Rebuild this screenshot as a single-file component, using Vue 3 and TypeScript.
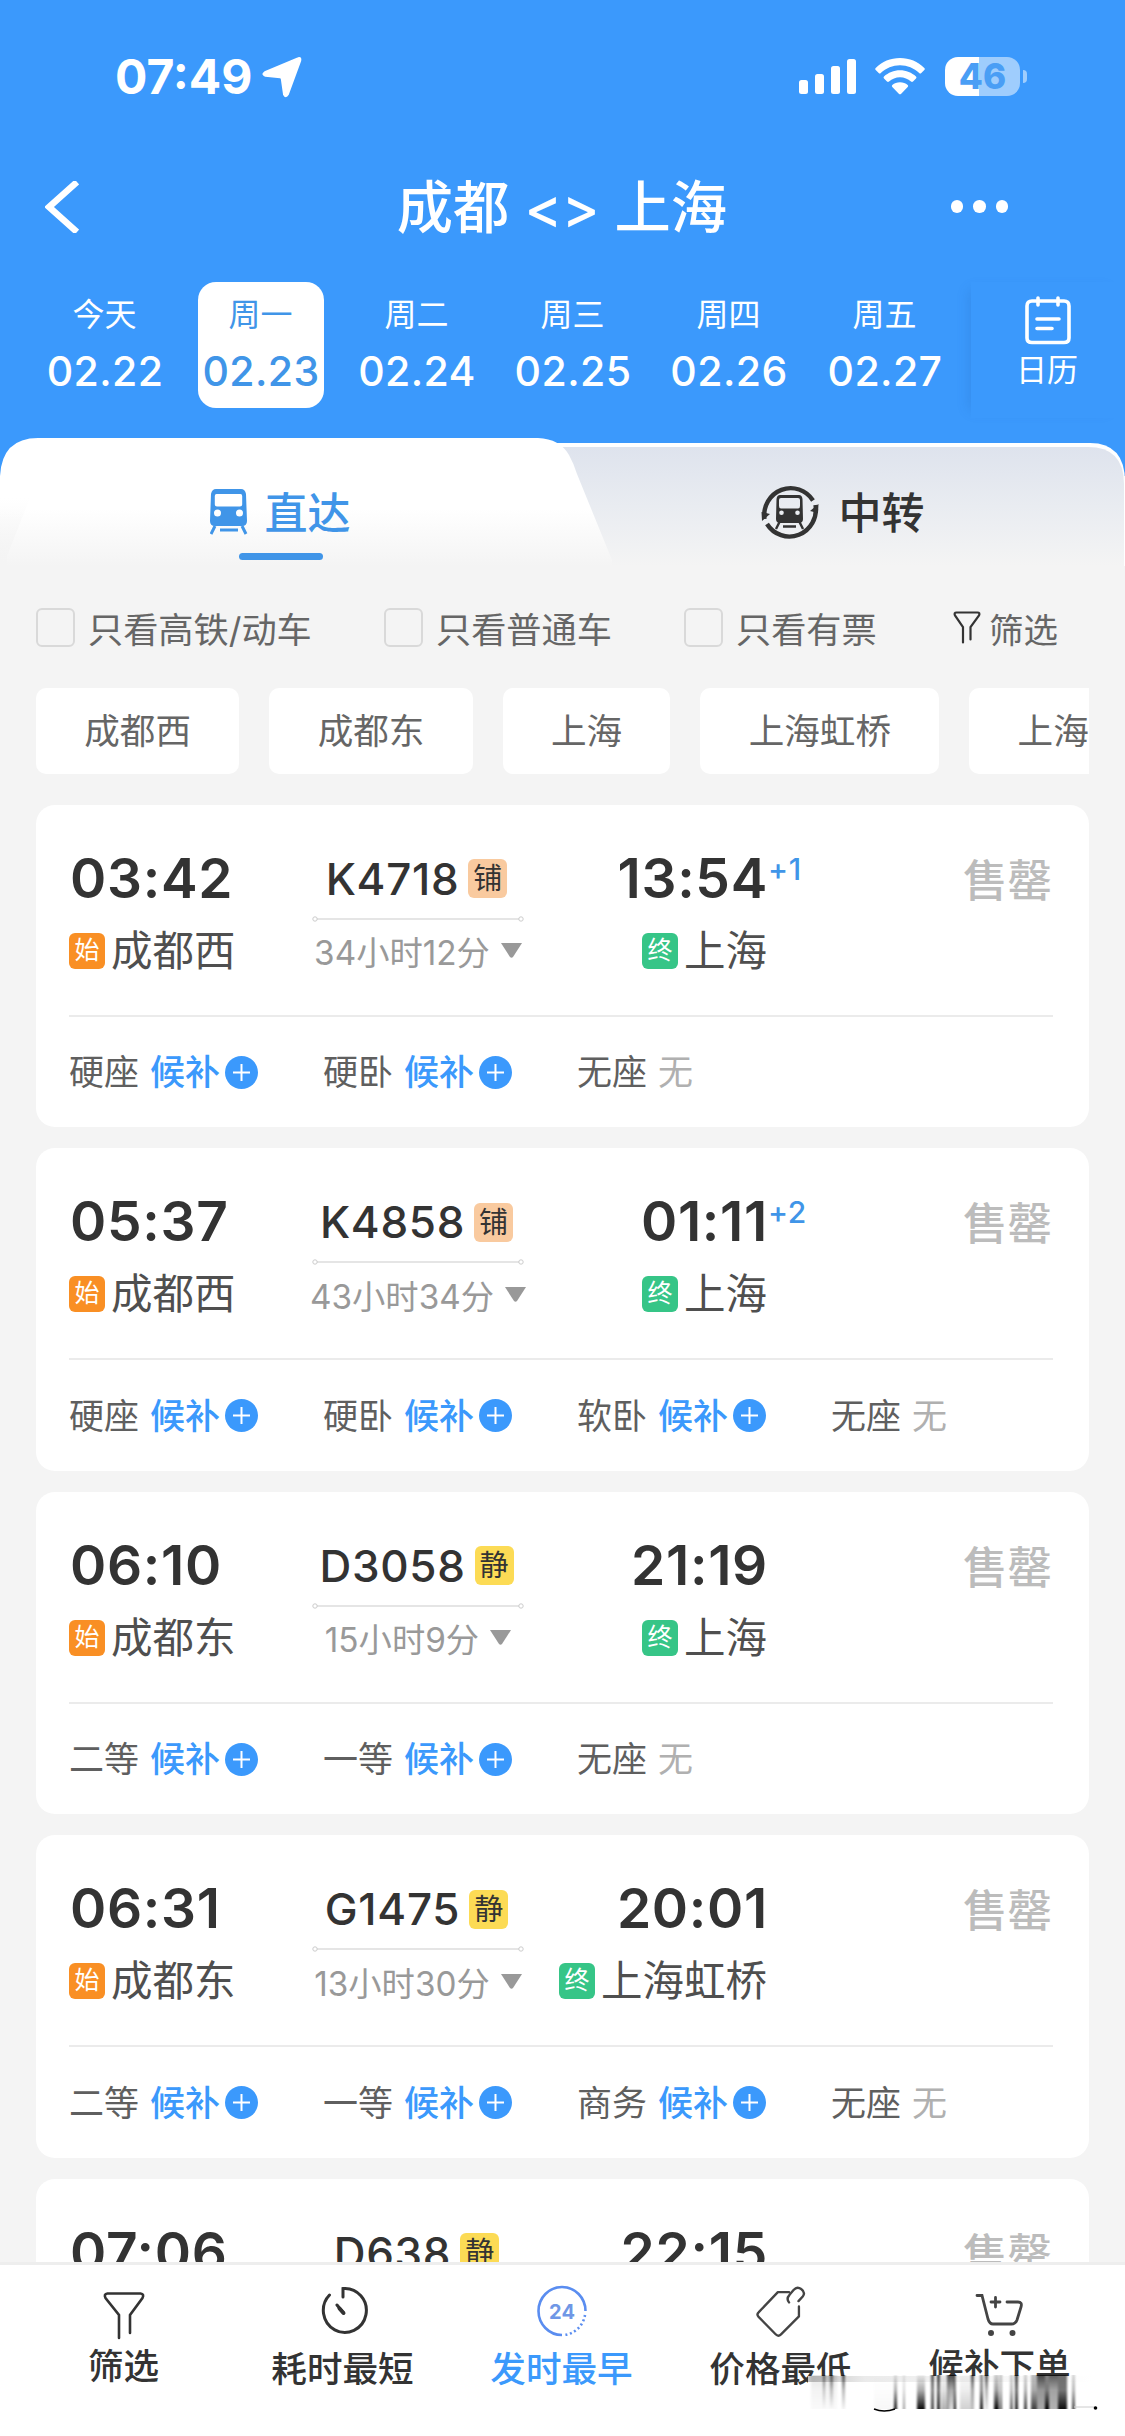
<script setup lang="ts">
interface Seat { name: string; waitlist: boolean }
interface Train {
  dep: string
  from: string
  no: string
  tag: '铺' | '静'
  duration: string
  arr: string
  plus?: string
  to: string
  seats: Seat[]
}

const days = [
  { week: '今天', date: '02.22' },
  { week: '周一', date: '02.23' },
  { week: '周二', date: '02.24' },
  { week: '周三', date: '02.25' },
  { week: '周四', date: '02.26' },
  { week: '周五', date: '02.27' },
]
const activeDay = 1

const checks = ['只看高铁/动车', '只看普通车', '只看有票']
const stations = ['成都西', '成都东', '上海', '上海虹桥', '上海']

const w = (name: string): Seat => ({ name, waitlist: true })
const none: Seat = { name: '无座', waitlist: false }

const trains: Train[] = [
  { dep: '03:42', from: '成都西', no: 'K4718', tag: '铺', duration: '34小时12分', arr: '13:54', plus: '+1', to: '上海', seats: [w('硬座'), w('硬卧'), none] },
  { dep: '05:37', from: '成都西', no: 'K4858', tag: '铺', duration: '43小时34分', arr: '01:11', plus: '+2', to: '上海', seats: [w('硬座'), w('硬卧'), w('软卧'), none] },
  { dep: '06:10', from: '成都东', no: 'D3058', tag: '静', duration: '15小时9分', arr: '21:19', to: '上海', seats: [w('二等'), w('一等'), none] },
  { dep: '06:31', from: '成都东', no: 'G1475', tag: '静', duration: '13小时30分', arr: '20:01', to: '上海虹桥', seats: [w('二等'), w('一等'), w('商务'), none] },
  { dep: '07:06', from: '', no: 'D638', tag: '静', duration: '', arr: '22:15', to: '', seats: [] },
]

// vertical streaks: x, width, opacity at the top, opacity at the bottom
const streaks: [number, number, number, number][] = [
  [3, 26, 0.12, 0.02], [15, 2, 0.7, 0], [22, 3, 0.7, 0], [34, 3, 0.8, 0.05],
  [66, 22, 0, 0.03], [86, 3, 0.1, 0.9], [95, 2, 0.1, 0.4], [109, 8, 0.05, 0.95],
  [123, 3, 0.8, 0.7], [129, 3, 0.9, 0.85], [133, 8, 0.05, 0.3], [139, 8, 0.85, 0.15], [146, 2, 0.4, 0.9],
  [152, 14, 0.03, 0.18], [163, 3, 0.85, 0.1], [172, 3, 0.5, 0.9], [177, 3, 0.85, 0.1],
  [186, 5, 0.2, 0.95], [192, 2, 0.3, 0.7], [202, 3, 0.2, 0.6], [207, 3, 0.9, 0.85], [216, 3, 0.2, 0.75],
  [223, 6, 0.3, 0.75], [229, 8, 0.9, 0.35], [237, 4, 0.6, 1], [241, 9, 0.8, 0.3], [250, 9, 0.7, 0.95],
  [264, 3, 0.2, 0.7],
]
</script>

<template>
  <div class="phone">
    <header class="top">
      <div class="status">
        <span class="clock">07:49</span>
        <svg class="loc" width="40" height="42" viewBox="0 0 40 42"><path d="M36.500 2.500Q38.600 1.500 38 4.500L25.500 38.500Q23.800 41.500 22.300 38.500L20 22.500Q19.800 21 18 21L3.500 19.600Q0 18.300 3 16.500Z" fill="#fff" stroke="#fff" stroke-width="2.500" stroke-linejoin="round" /></svg>
        <span class="grow"></span>
        <svg class="bars" width="58" height="36" viewBox="0 0 58 36" fill="#fff">
          <rect x="0" y="21" width="9" height="14" rx="2.500" /><rect x="16" y="15" width="9" height="20" rx="2.500" />
          <rect x="32" y="7" width="9" height="28" rx="2.500" /><rect x="48" y="0" width="9" height="35" rx="2.500" />
        </svg>
        <svg class="wifi" width="50" height="37" viewBox="0 0 50 37" fill="#fff">
          <path d="M25 0C34.500 0 43 3.700 49.300 9.900Q50.300 11 49.300 12L46.300 15Q45.300 16 44.200 15C39 10.200 32.300 7.300 25 7.300S11 10.200 5.800 15Q4.700 16 3.700 15L.7 12Q-.3 11 .7 9.900C7 3.700 15.500 0 25 0Z" />
          <path d="M25 12.200C31.200 12.200 36.800 14.600 41 18.400Q42 19.500 41 20.500L38 23.500Q37 24.400 36 23.500C33 20.900 29.200 19.300 25 19.300S17 20.900 14 23.500Q13 24.400 12 23.500L9 20.500Q8 19.500 9 18.400C13.200 14.600 18.800 12.200 25 12.200Z" />
          <path d="M25 24.300C28 24.300 30.600 25.300 32.700 27Q33.700 28 32.700 29L26.200 35.700Q25 36.800 23.800 35.700L17.300 29Q16.300 28 17.300 27C19.400 25.300 22 24.300 25 24.300Z" />
        </svg>
        <span class="battery"><b>46</b></span><i class="cap"></i>
      </div>

      <div class="nav">
        <svg width="34" height="52" viewBox="0 0 34 52"><path d="M32 1L4 26L32 51" fill="none" stroke="#fff" stroke-width="6.500" /></svg>
        <h1>成都 &lt;&gt; 上海</h1>
        <span class="dots"><i></i><i></i><i></i></span>
      </div>

      <div class="dates">
        <div v-for="(d, i) in days" :key="d.date" class="day" :class="{ on: i === activeDay }">
          <span class="week">{{ d.week }}</span>
          <span class="date">{{ d.date }}</span>
        </div>
        <div class="calendar">
          <svg width="46" height="49" viewBox="0 0 46 49" fill="none" stroke="#fff" stroke-width="3.600" stroke-linecap="round">
            <path d="M10 5H7Q2 5 2 10V42Q2 46.500 7 46.500H39Q44 46.500 44 42V10Q44 5 39 5H36M17 5H29M13 2V9M33 2V9M12 23H34M12 32.500H27M9 5H37" />
          </svg>
          <span>日历</span>
        </div>
      </div>
    </header>

    <div class="tabs">
      <svg class="shape" width="1125" height="128" viewBox="0 0 1125 128">
        <defs>
          <linearGradient id="grey" x1="0" y1="0" x2="0" y2="1"><stop offset="0" stop-color="#dee3ed" /><stop offset=".5" stop-color="#e9ecf1" /><stop offset="1" stop-color="#f4f4f4" /></linearGradient>
          <linearGradient id="white" x1="0" y1="0" x2="0" y2="1"><stop offset="0" stop-color="#fff" /><stop offset=".55" stop-color="#fff" /><stop offset="1" stop-color="#f4f4f4" /></linearGradient>
          <linearGradient id="edge" x1="0" y1="0" x2="0" y2="1"><stop offset="0" stop-color="#f4f4f4" stop-opacity="0" /><stop offset="1" stop-color="#f4f4f4" /></linearGradient>
        </defs>
        <path d="M400 5H1090Q1125 5 1125 44V128H400Z" fill="#fff" />
        <path d="M400 9H1088Q1124 9 1124 46V128H400Z" fill="url(#grey)" />
        <path d="M0 38Q2 0 38 0H538Q560 1 569 17Q574 26 577 36L612 122V128H0Z" fill="url(#white)" />
        <path d="M0 60H30L7 118V128H0Z" fill="url(#edge)" />
      </svg>
      <div class="tab active">
        <div class="label">
          <svg width="38" height="46" viewBox="0 0 38 46">
            <path fill="#4095e8" fill-rule="evenodd" d="M6 0H31Q35 0 36 5L37 32Q37 37 32 37H5Q0 37 0 32L1 5Q2 0 6 0ZM6.500 5Q4.800 5 4.800 7V15.500Q4.800 17.500 7 17.500H30Q32.200 17.500 32.200 15.500V7Q32.200 5 30.500 5ZM7.500 20.500A3.500 3.500 0 1 0 7.500 27.500A3.500 3.500 0 1 0 7.500 20.500ZM29.500 20.500A3.500 3.500 0 1 0 29.500 27.500A3.500 3.500 0 1 0 29.500 20.500Z" />
            <path d="M5 37L1 45M32 37L36 45M10 41H28" stroke="#4095e8" stroke-width="3" />
          </svg>
          <span>直达</span>
        </div>
        <i class="underline"></i>
      </div>
      <div class="tab">
        <div class="label second">
          <svg width="60" height="60" viewBox="0 0 60 60">
            <g fill="none" stroke="#333" stroke-width="4.400">
              <path d="M4.500 37A26.500 27 0 0 1 53 18.500" /><path d="M55.500 23A26.500 27 0 0 1 7 42" />
            </g>
            <path d="M1.500 30L2 39L10 32ZM50 29L58.500 22L58 31Z" fill="#333" />
            <path fill="#333" fill-rule="evenodd" d="M20 13H39Q42 13 42.500 17L43 37Q43 41 39 41H20Q16 41 16 37L16.500 17Q17 13 20 13ZM21 16Q19 16 19 18V24Q19 26.500 21 26.500H38Q40 26.500 40 24V18Q40 16 38 16ZM21.500 28.500A2.300 2.300 0 1 0 21.500 33.100A2.300 2.300 0 1 0 21.500 28.500ZM37.500 28.500A2.300 2.300 0 1 0 37.500 33.100A2.300 2.300 0 1 0 37.500 28.500Z" />
            <path d="M19.500 40L16 47M39.500 40L43 47M23 44.500H36" stroke="#333" stroke-width="2.400" />
          </svg>
          <span>中转</span>
        </div>
      </div>
    </div>

    <div class="filters">
      <label v-for="c in checks" :key="c"><i class="box"></i><span>{{ c }}</span></label>
      <div class="more">
        <svg width="28" height="33" viewBox="0 0 28 33"><path d="M10 31.500V16L2 4.500Q.7 1.500 3.500 1.500H24.500Q27.300 1.500 26 4.500L17.500 16V28.500" fill="none" stroke="#333" stroke-width="2.200" stroke-linecap="round" /></svg>
        <span>筛选</span>
      </div>
    </div>

    <div class="chips"><span v-for="(s, i) in stations" :key="i">{{ s }}</span></div>

    <main class="list">
      <article v-for="t in trains" :key="t.no" class="card">
        <div class="info">
          <div class="dep">
            <div class="time">{{ t.dep }}</div>
            <div v-if="t.from" class="station"><i class="mark start">始</i>{{ t.from }}</div>
          </div>
          <div class="mid">
            <div class="no"><span>{{ t.no }}</span><i class="tag" :class="{ quiet: t.tag === '静' }">{{ t.tag }}</i></div>
            <template v-if="t.duration">
              <svg class="line" width="212" height="8" viewBox="0 0 212 8" fill="none" stroke="#ccc"><path d="M5 4H207" stroke-width="1.200" /><circle cx="3" cy="4" r="2.200" /><circle cx="209" cy="4" r="2.200" /></svg>
              <div class="duration">{{ t.duration }}<svg width="21" height="15" viewBox="0 0 21 15"><path d="M0 0H21L12 14Q10.500 15.500 9 14Z" fill="#999" /></svg></div>
            </template>
          </div>
          <div class="arr">
            <div class="time">{{ t.arr }}<sup v-if="t.plus">{{ t.plus }}</sup></div>
            <div v-if="t.to" class="station"><i class="mark end">终</i>{{ t.to }}</div>
          </div>
          <div class="sold">售罄</div>
        </div>
        <div class="seats">
          <div v-for="s in t.seats" :key="s.name" class="seat">
            <span>{{ s.name }}</span>
            <template v-if="s.waitlist">
              <b>候补</b>
              <svg width="33" height="33" viewBox="0 0 33 33"><circle cx="16.500" cy="16.500" r="16.500" fill="#3b99fc" /><path d="M8 16.500H25M16.500 8V25" stroke="#fff" stroke-width="2" /></svg>
            </template>
            <em v-else>无</em>
          </div>
        </div>
      </article>
    </main>

    <footer class="bar">
      <div class="item up">
        <svg width="48" height="52" viewBox="0 0 48 52" fill="none" stroke="#333" stroke-width="2.600" stroke-linecap="round"><path d="M19 49V26L5.500 9Q3.500 5 7.500 4.500H40.500Q44.500 5 42.500 9L30 26V44" /></svg>
        <span>筛选</span>
      </div>
      <div class="item">
        <svg width="48" height="52" viewBox="0 0 48 52" fill="none" stroke="#333" stroke-width="3" stroke-linecap="round"><path d="M10.500 10A21.500 22 0 1 0 24 3.500V12M18 20L24.500 28" /><path d="M20.500 23.500L24.500 28" stroke-width="4" /></svg>
        <span>耗时最短</span>
      </div>
      <div class="item on">
        <svg width="52" height="52" viewBox="0 0 52 52" fill="none" stroke="#5a8df0" stroke-width="2.600">
          <path d="M26 50A23.500 24 0 1 1 49.500 26" /><path d="M49 30A23.500 24 0 0 1 28 50" stroke-dasharray="2 2.600" />
          <text x="26" y="33.500" text-anchor="middle" font-size="20" font-weight="700" stroke="none" fill="#6f97e6">24</text>
        </svg>
        <span>发时最早</span>
      </div>
      <div class="item">
        <svg width="58" height="58" viewBox="0 0 58 58" fill="none" stroke="#444" stroke-width="2.600" stroke-linecap="round" stroke-linejoin="round"><path d="M38 8H25.500L4 30.500Q1.500 33 4 35.500L23 55Q26 58 29 55L49 35V24" /><path d="M38 19.500Q34.500 15.500 38.500 11L43 5.500Q47 1 51.500 4.500Q56.500 8 53.500 12.500L48.500 18" /></svg>
        <span>价格最低</span>
      </div>
      <div class="item up">
        <svg width="50" height="52" viewBox="0 0 50 52" fill="none" stroke="#444" stroke-width="2.800" stroke-linecap="round"><path d="M2 6.500H7L13 30Q14.500 35 18 35H36.500Q40.500 35 42 31L46 18Q47.500 13 43 13H32M16 13H25M20.500 8.500V18" /><circle cx="16" cy="44" r="1.600" fill="#333" /><circle cx="37.500" cy="44" r="1.600" fill="#333" /></svg>
        <span>候补下单</span>
      </div>

      <svg class="streaks" width="290" height="42" viewBox="0 0 290 42">
        <defs>
          <linearGradient v-for="(s, i) in streaks" :id="'s' + i" :key="i" x1="0" y1="0" x2="0" y2="1">
            <stop offset="0" stop-color="#000" :stop-opacity="s[2] * 0.8" /><stop offset=".45" stop-color="#000" :stop-opacity="(s[2] + s[3]) * 0.33" /><stop offset="1" stop-color="#000" :stop-opacity="s[3]" />
          </linearGradient>
          <linearGradient id="band" x1="0" y1="0" x2="1" y2="0"><stop offset="0" stop-color="#999" /><stop offset=".2" stop-color="#ddd" /><stop offset="1" stop-color="#fff" /></linearGradient>
          <filter id="soft" x="-5%" y="0" width="110%" height="100%"><feGaussianBlur stdDeviation="1 0" /></filter>
        </defs>
        <rect width="290" height="42" y="1" fill="#fff" />
        <rect width="284" height="6" y="1" fill="url(#band)" opacity=".6" />
        <g filter="url(#soft)"><rect v-for="(s, i) in streaks" :key="i" :x="s[0]" y="0" :width="s[1]" height="34" :fill="'url(#s' + i + ')'" /></g>
        <path d="M66 34Q76 38 87 34" fill="none" stroke="#000" stroke-width="1.500" />
        <path d="M266 32H288" stroke="#ccc" stroke-width="1" /><circle cx="287.500" cy="33" r="1.800" />
      </svg>
    </footer>
  </div>
</template>

<style>
body { margin: 0; background: #f4f4f4; }
</style>

<style scoped>
.phone { width: 1125px; height: 2436px; display: flex; flex-direction: column; overflow: hidden; background: #f4f4f4; color: #333; font-family: Inter, "Noto Sans CJK SC", sans-serif; }
i, em { font-style: normal; }
svg { display: block; flex: none; }
.top { height: 476px; margin-bottom: -38px; background: #3b99fc; color: #fff; flex: none; }

.status { height: 153px; display: flex; align-items: center; padding: 0 98px 0 115px; margin-bottom: 1px; }
.clock { font-size: 48px; font-weight: 700; line-height: 60px; }
.loc { margin-left: 10px; }
.grow { flex: 1; }
.bars { margin-right: 18px; }
.wifi { margin-right: 20px; }
.battery { width: 75px; height: 39px; border-radius: 13px; background: linear-gradient(90deg, #fff 46%, #9fcdfd 46%); display: flex; align-items: center; justify-content: center; }
.battery b { font-size: 35px; line-height: 39px; color: #4a9ef5; font-weight: 800; }
.cap { width: 4px; height: 13px; border-radius: 0 4px 4px 0; background: #9fcdfd; margin-left: 3px; }

.nav { height: 105px; display: grid; grid-template-columns: 1fr auto 1fr; align-items: center; padding: 0 46px 0 45px; }
.nav h1 { margin: 0; font-size: 56.300px; font-weight: 500; line-height: 80px; padding-top: 2px; white-space: pre; }
.dots { display: flex; gap: 10px; justify-self: end; margin-right: 71px; }
.dots i { width: 12.500px; height: 12.500px; border-radius: 50%; background: #fff; }

.dates { display: flex; padding: 23px 0 0 42px; }
.day { width: 126px; height: 126px; margin-right: 30px; border-radius: 18px; display: flex; flex: none; flex-direction: column; align-items: center; }
.day.on { background: #fff; color: #4095e8; }
.week { font-size: 32px; line-height: 40px; margin-top: 13px; margin-right: 1px; }
.date { font-size: 41px; line-height: 44px; font-weight: 550; margin-top: 14px; letter-spacing: .4px; white-space: nowrap; }
.calendar { flex: 1; margin-left: -7px; height: 136px; display: flex; flex-direction: column; align-items: center; box-shadow: -9px 0 12px -8px rgba(30, 90, 170, .22); }
.calendar svg { margin-top: 14px; margin-right: 1px; }
.calendar span { font-size: 31px; line-height: 40px; margin-top: 5px; margin-right: 2px; }

.tabs { position: relative; height: 128px; display: flex; flex: none; }
.shape { position: absolute; left: 0; top: 0; }
.tab { position: relative; width: 562px; display: flex; flex-direction: column; align-items: center; }
.label { display: flex; align-items: center; height: 62px; margin-top: 43px; margin-right: 2px; gap: 17px; font-size: 43px; line-height: 60px; font-weight: 500; color: #333; }
.label span { padding-top: 2px; }
.label.second { gap: 19px; }
.active .label { color: #4095e8; }
.underline { width: 84px; height: 7px; border-radius: 4px; background: #4095e8; margin-top: 10px; }

.filters { height: 122px; display: flex; flex: none; align-items: center; padding: 0 67px 0 36px; font-size: 35.200px; color: #666; }
.filters label { display: flex; align-items: center; height: 60px; gap: 13px; }
.filters span { padding-top: 1px; }
.filters label:nth-child(1) { width: 348px; }
.filters label:nth-child(2) { width: 300px; }
.box { width: 35px; height: 35px; border: 2px solid #d9d9d9; border-radius: 6px; }
.more { margin-left: auto; display: flex; align-items: center; gap: 8px; font-size: 34.500px; }

.chips { display: flex; flex: none; gap: 30px; margin: 0 36px 30.500px; height: 86px; overflow: hidden; }
.chips span { flex: none; padding: 0 48.300px; border-radius: 10px; background: #fff; font-size: 35.600px; line-height: 87px; color: #666; }

.list { flex: 1; min-height: 0; overflow: hidden; display: flex; flex-direction: column; gap: 21px; padding: 0 36px; }
.card { height: 322.500px; flex: none; background: #fff; border-radius: 19px; padding: 0 36px 0 33px; box-sizing: border-box; }
.info { height: 210px; border-bottom: 2px solid #ebebeb; display: flex; }
.time { font-size: 55px; font-weight: 600; line-height: 60px; margin-top: 43px; position: relative; letter-spacing: .7px; }
.dep { width: 234px; flex: none; }
.dep .time { padding-left: 1px; }
.station { display: flex; align-items: center; font-size: 41.500px; line-height: 50px; margin-top: 18px; color: #4f4f4f; white-space: nowrap; height: 50px; }
.mark { width: 36px; height: 36px; border-radius: 6px; color: #fff; font-size: 25px; line-height: 35px; text-align: center; margin-right: 6px; }
.start { background: #f98f24; }
.end { background: #36c587; }
.mid { width: 230px; flex: none; display: flex; flex-direction: column; align-items: center; }
.no { display: flex; align-items: center; height: 50px; margin-top: 49px; margin-right: 3px; gap: 9px; font-size: 44px; font-weight: 550; letter-spacing: .7px; }
.tag { width: 39px; height: 39px; border-radius: 6px; background: #f9ca9f; font-size: 29px; line-height: 39px; text-align: center; font-weight: 400; letter-spacing: 0; }
.tag.quiet { background: #fcdb55; }
.line { margin-top: 11px; }
.duration { display: flex; align-items: center; gap: 11px; height: 44px; margin-top: 6px; font-size: 33.300px; color: #999; white-space: nowrap; }
.arr { width: 234px; flex: none; display: flex; flex-direction: column; align-items: flex-end; }
.arr .time { margin-right: -1px; }
.arr sup { position: absolute; left: 100%; top: 0; font-size: 30px; line-height: 43px; font-weight: 500; color: #4095e8; }
.sold { margin-left: auto; margin-top: 46px; font-size: 44.500px; line-height: 60px; font-weight: 500; color: #bcbcbc; padding-right: 1px; }
.seats { display: flex; height: 111px; align-items: center; }
.seat { width: 254px; flex: none; display: flex; align-items: center; font-size: 35px; line-height: 50px; color: #5f5f5f; }
.seat b { font-weight: 500; color: #3b99fc; margin-left: 11px; }
.seat svg { margin-left: 5px; }
.seat em { color: #b0b0b0; margin-left: 11px; }

.bar { position: relative; height: 171px; flex: none; border-top: 3px solid #eee; background: #fff; display: flex; padding: 0 15px 0 14px; }
.item { width: 219px; display: flex; flex-direction: column; align-items: center; font-size: 35.600px; font-weight: 500; height: 130px; }
.item svg { height: 52px; margin-top: 20px; overflow: visible; }
.item span { line-height: 44px; margin-top: 11px; }
.item.up svg { margin-top: 24px; }
.item.up span { margin-top: 4px; }
.on { color: #3b99fc; }
.bar .streaks { position: absolute; left: 808px; top: 110px; }
</style>
